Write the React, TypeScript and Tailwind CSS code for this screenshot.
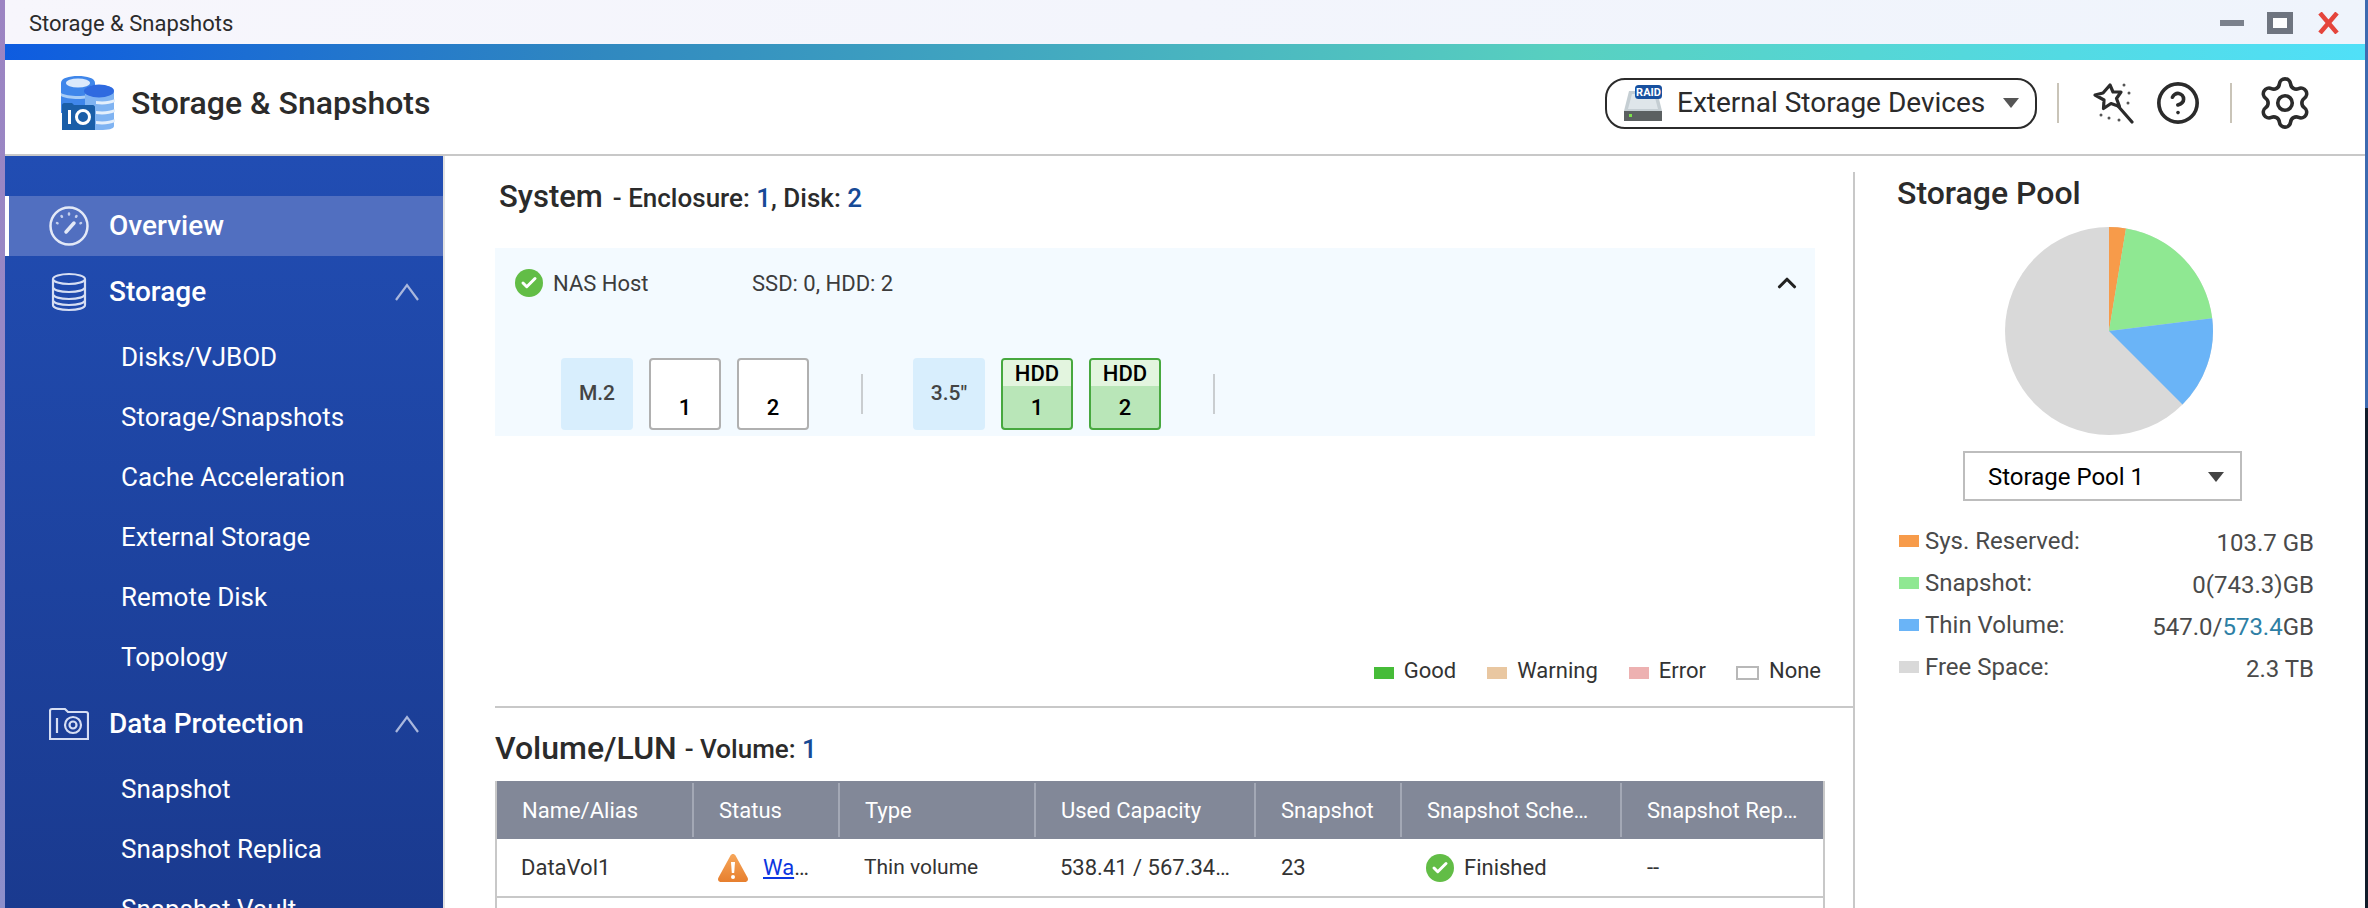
import { CircleHelp, Settings, Check, ChevronUp } from "lucide-react"

const storageItems = ["Disks/VJBOD", "Storage/Snapshots", "Cache Acceleration", "External Storage", "Remote Disk", "Topology"]
const protectionItems = ["Snapshot", "Snapshot Replica", "Snapshot Vault"]

const legend = [
  { label: "Sys. Reserved:", swatch: "bg-[#f79b4a]", value: <>103.7 GB</> },
  { label: "Snapshot:", swatch: "bg-[#8fe892]", value: <>0(743.3)GB</> },
  {
    label: "Thin Volume:",
    swatch: "bg-[#6ab4f7]",
    value: (
      <>
        547.0/<span className="text-[#2e7fa5]">573.4</span>GB
      </>
    ),
  },
  { label: "Free Space:", swatch: "bg-[#d9d9d9]", value: <>2.3 TB</> },
]

function AppLogo() {
  return (
    <svg width="55" height="56" viewBox="0 0 55 56" className="shrink-0">
      <path d="M1 8c0-5 8-7 17-7s17 2 17 7v30H1z" fill="#3f86ea" />
      <ellipse cx="18" cy="8" rx="12" ry="4.5" fill="#dbe9fb" />
      <path d="M1 18c6 4 28 4 34 0v3c-6 4-28 4-34 0z" fill="#a9cdf6" />
      <path d="M25 15c0-3 7-5 14-5 8 0 16 2 15 7v34c0 3-6 4-14 4H25z" fill="#7fb3f2" />
      <ellipse cx="39" cy="16" rx="15" ry="6.5" fill="#2f6ae0" />
      <path d="M36 26c8 1 14 0 19-2v3c-5 2-11 3-19 2zM36 36c8 1 14 0 19-2v3c-5 2-11 3-19 2zM36 46c8 1 14 0 19-2v3c-5 2-11 3-19 2z" fill="#e4effc" />
      <path d="M2 30c0-1 1-2 2-2h8l2 2h19c1 0 2 1 2 2v23H2z" fill="#1a5ea8" />
      <rect x="8" y="35" width="3" height="14" fill="#fff" />
      <circle cx="23" cy="42" r="6.5" fill="none" stroke="#fff" strokeWidth="3" />
    </svg>
  )
}

function RaidIcon() {
  return (
    <svg width="40" height="36" viewBox="0 0 40 36" className="shrink-0">
      <path d="M6 6h28l5 20H1z" fill="#c5ced3" />
      <path d="M9 9h22l4 15H5z" fill="#dfe6ea" />
      <rect x="1" y="26" width="38" height="10" fill="#5b6061" />
      <rect x="6" y="29" width="3" height="3" fill="#7be04a" />
      <rect x="12" y="0" width="27" height="14" rx="3.5" fill="#17509f" />
      <text x="25.5" y="11" textAnchor="middle" fontSize="11" fontWeight="700" fill="#fff" fontFamily="Roboto, sans-serif">
        RAID
      </text>
    </svg>
  )
}

function WandIcon() {
  return (
    <svg width="42" height="42" viewBox="0 0 42 42" className="shrink-0" fill="none" stroke="#2b2b2b">
      <path d="M18 3l3 7 8 0-4.500 6.500 3 8-8.500-3-7.500 5 .5-8.500L3 13l8-2z" strokeWidth="3.200" strokeLinejoin="round" />
      <path d="M26 24l14 16" strokeWidth="3.200" strokeLinecap="round" />
      <g fill="#555" stroke="none">
        <circle cx="32" cy="3" r="1.500" />
        <circle cx="37" cy="11" r="1.500" />
        <circle cx="36" cy="21" r="1.500" />
        <circle cx="9" cy="33" r="1.500" />
        <circle cx="17" cy="36" r="1.500" />
        <circle cx="27" cy="38" r="1.500" />
      </g>
    </svg>
  )
}

function CloseIcon() {
  return (
    <svg width="21" height="22" viewBox="0 0 21 22" className="shrink-0" fill="none" stroke="#e5453c" strokeWidth="4.500">
      <path d="M2 1l17 20M19 1L2 21" />
    </svg>
  )
}

function SideChevron() {
  return (
    <svg width="26" height="20" viewBox="0 0 26 20" className="shrink-0" fill="none" stroke="#a9b7dd" strokeWidth="2.200">
      <path d="M2 18L13 3l11 15" />
    </svg>
  )
}

function GaugeIcon() {
  return (
    <svg width="40" height="40" viewBox="0 0 40 40" fill="none" stroke="#e3e9f7" className="shrink-0">
      <circle cx="20" cy="20" r="18.500" strokeWidth="2.500" />
      <path d="M17 26l8-9" strokeWidth="3.500" strokeLinecap="round" />
      <g strokeWidth="2.500" strokeLinecap="round" stroke="#c3cfec">
        <path d="M8 17l.5.3M12.500 10l.5.8M20 7.500v1M27.500 10l-.5.8M32 17l-.5.3" />
      </g>
    </svg>
  )
}

function DatabaseIcon() {
  return (
    <svg width="40" height="40" viewBox="0 0 40 40" fill="none" stroke="#d6def3" strokeWidth="2.200" className="shrink-0">
      <ellipse cx="20" cy="7" rx="16" ry="5" />
      <path d="M4 7v26c0 3 7 5 16 5s16-2 16-5V7" />
      <path d="M4 15c0 3 7 5 16 5s16-2 16-5M4 22c0 3 7 5 16 5s16-2 16-5M4 28c0 3 7 5 16 5s16-2 16-5" />
    </svg>
  )
}

function ProtectionIcon() {
  return (
    <svg width="40" height="34" viewBox="0 0 40 34" fill="none" stroke="#d6def3" strokeWidth="2.200" className="shrink-0">
      <path d="M1 4c0-1 1-2 2-2h13l3 3h18c1 0 2 1 2 2v25H1z" />
      <path d="M8 11v15" />
      <circle cx="24" cy="18" r="8" />
      <circle cx="24" cy="18" r="3.500" />
    </svg>
  )
}

function WarningIcon() {
  return (
    <svg width="32" height="30" viewBox="0 0 32 30" className="shrink-0">
      <defs>
        <linearGradient id="warn" x1="0" y1="0" x2="0" y2="1">
          <stop offset="0" stopColor="#f6a65a" />
          <stop offset="1" stopColor="#e77f2e" />
        </linearGradient>
      </defs>
      <path d="M13.500 2.500c1.200-2 3.800-2 5 0l12 22c1.200 2.200 0 4.500-2.500 4.500H4c-2.500 0-3.700-2.300-2.500-4.500z" fill="url(#warn)" />
      <path d="M14 9h4l-.8 11h-2.400z" fill="#fff" />
      <circle cx="16" cy="24" r="2" fill="#fff" />
    </svg>
  )
}

function StatusDot({ className }: { className: string }) {
  return (
    <span className={"flex shrink-0 items-center justify-center rounded-full bg-[#62bd46] " + className}>
      <Check size={18} strokeWidth={4} color="#fff" />
    </span>
  )
}

function PieChart() {
  return (
    <svg width="208" height="208" viewBox="-104 -104 208 208" className="shrink-0">
      <circle r="104" fill="#d9d9d9" />
      <path d="M0 0L0 -104A104 104 0 0 1 17 -102.600Z" fill="#f79b4a" />
      <path d="M0 0L17 -102.600A104 104 0 0 1 103.200 -12.700Z" fill="#8fe892" />
      <path d="M0 0L103.200 -12.700A104 104 0 0 1 73.500 73.500Z" fill="#6ab4f7" />
    </svg>
  )
}

function SubItem({ label }: { label: string }) {
  return <div className="flex h-[60px] items-center pb-[1px] pl-[116px] text-[26px] text-white">{label}</div>
}

function GroupHeader({ label, icon }: { label: string; icon: React.ReactNode }) {
  return (
    <div className="flex h-[72px] items-center pl-[44px] pr-[23px]">
      <span className="flex w-[40px] justify-center">{icon}</span>
      <span className="ml-[20px] flex-1 text-[28px] font-medium text-white">{label}</span>
      <SideChevron />
    </div>
  )
}

function Sidebar() {
  return (
    <aside className="w-[440px] shrink-0 border-r-2 border-[#e2e2e2] bg-gradient-to-b from-[#214db3] to-[#1a3a8f] pt-[40px]">
      <div className="flex h-[60px] items-center border-l-4 border-white bg-[#516fc0] pl-[40px]">
        <GaugeIcon />
        <span className="ml-[20px] text-[28px] font-medium text-white">Overview</span>
      </div>
      <GroupHeader label="Storage" icon={<DatabaseIcon />} />
      {storageItems.map((item) => (
        <SubItem key={item} label={item} />
      ))}
      <GroupHeader label="Data Protection" icon={<ProtectionIcon />} />
      {protectionItems.map((item) => (
        <SubItem key={item} label={item} />
      ))}
    </aside>
  )
}

function Slot({ label, top, green }: { label: string; top?: string; green?: boolean }) {
  return (
    <div
      className={
        "flex h-[72px] w-[72px] flex-col overflow-hidden rounded-[4px] border-2 text-[22px] font-medium text-black " +
        (green ? "border-[#47a83f] bg-[#b9e6b8]" : "border-[#b0b0b0] bg-white")
      }
    >
      <div className={"flex h-[26px] items-center justify-center " + (green ? "bg-[#e3f5df]" : "")}>{top}</div>
      <div className="flex flex-1 items-center justify-center">{label}</div>
    </div>
  )
}

function SlotLabel({ label }: { label: string }) {
  return (
    <div className="flex h-[72px] w-[72px] items-center justify-center rounded-[4px] bg-[#d8eefd] text-[21px] font-medium text-[#444]">
      {label}
    </div>
  )
}

function SystemPanel() {
  return (
    <div className="mt-[26px] h-[188px] w-[1320px] bg-[#f3faff]">
      <div className="flex h-[70px] items-center pl-[20px] pr-[13px] text-[22px] text-[#3c3c3c]">
        <StatusDot className="h-[28px] w-[28px]" />
        <span className="ml-[10px] w-[199px]">NAS Host</span>
        <span className="flex-1">SSD: 0, HDD: 2</span>
        <ChevronUp size={30} strokeWidth={2.500} color="#222" />
      </div>
      <div className="mt-[40px] flex items-center pl-[66px]">
        <SlotLabel label="M.2" />
        <div className="ml-[16px] flex gap-[16px]">
          <Slot label="1" />
          <Slot label="2" />
        </div>
        <div className="ml-[52px] h-[40px] w-[2px] bg-[#c9cdd0]" />
        <div className="ml-[50px]">
          <SlotLabel label={'3.5"'} />
        </div>
        <div className="ml-[16px] flex gap-[16px]">
          <Slot label="1" top="HDD" green />
          <Slot label="2" top="HDD" green />
        </div>
        <div className="ml-[52px] h-[40px] w-[2px] bg-[#c9cdd0]" />
      </div>
    </div>
  )
}

const cols = "grid grid-cols-[197px_146px_196px_220px_146px_220px_1fr]"

function HeadCell({ label }: { label: string }) {
  return (
    <div className="my-[2px] flex items-center border-r-2 border-[#a3a8b5] pl-[25px] last:border-r-0">{label}</div>
  )
}

function VolumeTable() {
  return (
    <div className="mt-[8px] h-[200px] w-[1330px] border-x-2 border-[#c8c8c8]">
      <div className={cols + " h-[58px] bg-[#828898] text-[22px] text-white"}>
        <HeadCell label="Name/Alias" />
        <HeadCell label="Status" />
        <HeadCell label="Type" />
        <HeadCell label="Used Capacity" />
        <HeadCell label="Snapshot" />
        <HeadCell label="Snapshot Sche…" />
        <HeadCell label="Snapshot Rep…" />
      </div>
      <div className={cols + " h-[59px] border-b-2 border-[#c8c8c8] text-[22px] text-[#333]"}>
        <div className="flex items-center pl-[24px]">DataVol1</div>
        <div className="flex items-center pl-[23px]">
          <WarningIcon />
          <span className="ml-[14px]">
            <a className="text-[#0b36e0] underline">Wa</a>…
          </span>
        </div>
        <div className="flex items-center pl-[24px] text-[21px]">Thin volume</div>
        <div className="flex items-center pl-[24px]">538.41 / 567.34…</div>
        <div className="flex items-center pl-[25px]">23</div>
        <div className="flex items-center pl-[24px]">
          <StatusDot className="h-[28px] w-[28px]" />
          <span className="ml-[10px]">Finished</span>
        </div>
        <div className="flex items-center pl-[25px]">--</div>
      </div>
    </div>
  )
}

function HealthLegend() {
  const items = [
    { label: "Good", swatch: "h-[12px] w-[20px] bg-[#46bc38]", gap: "ml-0" },
    { label: "Warning", swatch: "h-[12px] w-[20px] bg-[#e9c7a1]", gap: "ml-[31px]" },
    { label: "Error", swatch: "h-[12px] w-[20px] bg-[#edb1b1]", gap: "ml-[31px]" },
    { label: "None", swatch: "h-[14px] w-[23px] border-2 border-[#b8b8b8] bg-white", gap: "ml-[30px]" },
  ]
  return (
    <div className="mt-[219px] flex h-[30px] w-[1326px] items-center justify-end text-[22px] text-[#333]">
      {items.map((item) => (
        <div key={item.label} className={"flex items-center " + item.gap}>
          <span className={"mt-[6px] " + item.swatch} />
          <span className="ml-[10px]">{item.label}</span>
        </div>
      ))}
    </div>
  )
}

function PoolPanel() {
  return (
    <div className="flex flex-1 flex-col items-start pt-[16px]">
      <div className="w-full pl-[42px] text-[32px] leading-[42px] font-medium text-[#2b2b2b]">Storage Pool</div>
      <div className="ml-[150px] mt-[13px]">
        <PieChart />
      </div>
      <div className="ml-[108px] mt-[16px] flex h-[50px] w-[279px] items-center justify-between border-2 border-[#bdbdbd] pl-[23px] pr-[16px] pt-[1px] text-[24px] text-black">
        <span>Storage Pool 1</span>
        <span className="h-0 w-0 border-x-[8px] border-t-[10px] border-x-transparent border-t-[#444]" />
      </div>
      <div className="mt-[19px] w-full pl-[44px] pr-[51px]">
        {legend.map((row) => (
          <div key={row.label} className="flex h-[42px] items-center justify-between text-[24px] text-[#4a4a4a]">
            <span className="flex items-center">
              <span className={"h-[12px] w-[20px] " + row.swatch} />
              <span className="ml-[6px]">{row.label}</span>
            </span>
            <span className="mt-[4px]">{row.value}</span>
          </div>
        ))}
      </div>
    </div>
  )
}

export default function App() {
  return (
    <div className="flex h-[908px] w-[2368px] overflow-hidden bg-white font-['Roboto',sans-serif]">
      <div className="w-[5px] shrink-0 bg-gradient-to-b from-[#9c84c2] to-[#8d8fcb]" />
      <div className="flex min-w-0 flex-1 flex-col">
        {/* Title bar */}
        <div className="flex h-[44px] shrink-0 items-center bg-gradient-to-r from-[#f7f6fc] to-[#eff4fc] pl-[24px] pr-[26px] pt-[2px] text-[22px] text-[#2b2b2b]">
          <span className="flex-1">Storage &amp; Snapshots</span>
          <span className="h-[6px] w-[24px] bg-[#7b818c]" />
          <span className="ml-[23px] h-[22px] w-[26px] border-[6px] border-[#6f7580] bg-white" />
          <span className="ml-[25px]">
            <CloseIcon />
          </span>
        </div>
        <div className="h-[16px] shrink-0 bg-[linear-gradient(90deg,#0e5ce0_0%,#3088c0_25%,#58d0c0_66%,#50e0f8_100%)]" />
        {/* App header */}
        <div className="flex h-[96px] shrink-0 items-center border-b-2 border-[#c8c8c8] pb-[8px] pl-[55px] pr-[51px]">
          <AppLogo />
          <span className="ml-[16px] flex-1 text-[32px] font-medium text-[#2b2b2b]">Storage &amp; Snapshots</span>
          <div className="flex h-[51px] w-[432px] items-center rounded-[20px] border-2 border-[#2b2b2b] pl-[16px] text-[28px] text-[#2b2b2b]">
            <RaidIcon />
            <span className="ml-[14px] flex-1">External Storage Devices</span>
            <span className="mr-[16px] h-0 w-0 border-x-[8px] border-t-[10px] border-x-transparent border-t-[#555]" />
          </div>
          <div className="ml-[20px] h-[40px] w-[2px] bg-[#c9c4b8]" />
          <div className="ml-[33px]">
            <WandIcon />
          </div>
          <CircleHelp className="ml-[21px] shrink-0" size={46} strokeWidth={1.900} color="#2b2b2b" />
          <div className="ml-[29px] h-[40px] w-[2px] bg-[#c9c4b8]" />
          <Settings className="ml-[24px] shrink-0" size={58} strokeWidth={1.500} color="#2b2b2b" />
        </div>
        <div className="flex min-h-0 flex-1">
          <Sidebar />
          <div className="mt-[16px] w-[1410px] shrink-0 border-r-2 border-[#c8c8c8] pl-[50px]">
            <div className="flex h-[50px] items-center font-medium text-[#2b2b2b]">
              <span className="pl-[4px] text-[31px]">System</span>
              <span className="ml-[10px] mt-[2px] text-[26px]">
                - Enclosure: <span className="text-[#174a96]">1</span>, Disk: <span className="text-[#174a96]">2</span>
              </span>
            </div>
            <SystemPanel />
            <HealthLegend />
            <div className="mt-[21px] h-[2px] bg-[#c8c8c8]" />
            <div className="mt-[15px] flex h-[50px] items-center font-medium text-[#2b2b2b]">
              <span className="text-[32px]">Volume/LUN</span>
              <span className="ml-[8px] mt-[2px] text-[26px]">
                - Volume: <span className="text-[#174a96]">1</span>
              </span>
            </div>
            <VolumeTable />
          </div>
          <PoolPanel />
        </div>
      </div>
      <div className="flex w-[3px] shrink-0 flex-col">
        <div className="h-[408px] bg-[#3d6ab0]" />
        <div className="flex-1 bg-[#111c2a]" />
      </div>
    </div>
  )
}
